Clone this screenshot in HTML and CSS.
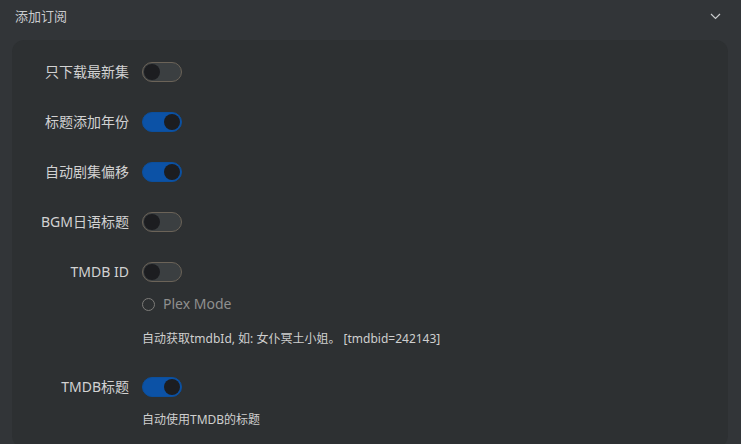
FILE: index.html
```html
<!DOCTYPE html>
<html lang="zh">
<head>
<meta charset="utf-8">
<link rel="stylesheet" href="styles.css">
</head>
<body>
<div class="panel">
  <div class="panel-head">
    <span class="panel-title">添加订阅</span>
    <svg class="chev" width="11" height="7" viewBox="0 0 11 7"><path d="M1 1 L5.5 5.5 L10 1" fill="none" stroke="#c9cbcd" stroke-width="1.2"/></svg>
  </div>
  <div class="card">
    <div class="field">
      <label class="lbl">只下载最新集</label>
      <div class="ctrl"><span class="sw"></span></div>
    </div>
    <div class="field">
      <label class="lbl">标题添加年份</label>
      <div class="ctrl"><span class="sw on"></span></div>
    </div>
    <div class="field">
      <label class="lbl">自动剧集偏移</label>
      <div class="ctrl"><span class="sw on"></span></div>
    </div>
    <div class="field">
      <label class="lbl">BGM日语标题</label>
      <div class="ctrl"><span class="sw"></span></div>
    </div>
    <div class="field">
      <label class="lbl">TMDB ID</label>
      <div class="ctrl">
        <span class="sw"></span>
        <div class="radio-row"><span class="radio"></span><span class="radio-text">Plex Mode</span></div>
        <div class="help">自动获取tmdbId, 如: 女仆冥土小姐。 [tmdbid=242143]</div>
      </div>
    </div>
    <div class="field">
      <label class="lbl">TMDB标题</label>
      <div class="ctrl">
        <span class="sw on"></span>
        <div class="help help2">自动使用TMDB的标题</div>
      </div>
    </div>
  </div>
</div>
</body>
</html>
```
FILE: styles.css
```css
html, body {
  margin: 0;
  padding: 0;
  height: 444px;
  background: #323538;
  font-family: "Noto Sans", "Noto Sans CJK SC", sans-serif;
  color: #d4d4d4;
  overflow: hidden;
}
.panel {
  width: 741px;
  height: 444px;
  overflow: hidden;
}
.panel-head {
  height: 34px;
  display: flex;
  align-items: center;
  justify-content: space-between;
  padding: 0 20px 0 15px;
}
.panel-title {
  font-size: 13px;
  color: #c9cbcd;
  line-height: 18px;
  margin-top: -2px;
}
.chev {
  margin-top: -2px;
}
.card {
  margin: 6px 13px 0 12px;
  background: #2d3032;
  border-radius: 12px;
  padding: 22px 0 20px 0;
  display: flex;
  flex-direction: column;
  gap: 30px;
}
.field {
  display: grid;
  grid-template-columns: 117px 1fr;
  column-gap: 13px;
  align-items: start;
}
.lbl {
  text-align: right;
  font-size: 14px;
  line-height: 20px;
  color: #d2d2d2;
}
.ctrl {
  display: flex;
  flex-direction: column;
  align-items: flex-start;
}
.sw {
  width: 40px;
  height: 20px;
  box-sizing: border-box;
  border-radius: 10px;
  background: #3b3f41;
  border: 1px solid #6b6358;
  position: relative;
  display: block;
}
.sw::after {
  content: "";
  position: absolute;
  top: 1px;
  left: 1px;
  width: 16px;
  height: 16px;
  border-radius: 50%;
  background: #1c1d20;
}
.sw.on {
  background: #0c52a6;
  border-color: #0b4f9d;
}
.sw.on::after {
  left: auto;
  right: 1px;
}
.radio-row {
  display: flex;
  align-items: center;
  margin-top: 14px;
  height: 16px;
}
.radio {
  width: 13px;
  height: 13px;
  box-sizing: border-box;
  border: 1px solid #7d7c79;
  border-radius: 50%;
  margin-right: 8px;
}
.radio-text {
  font-size: 14px;
  color: #8f8f8e;
  line-height: 16px;
}
.help {
  font-size: 12px;
  line-height: 16px;
  color: #cfcfcf;
  margin-top: 19px;
}
.help2 {
  margin-top: 15px;
}
```
